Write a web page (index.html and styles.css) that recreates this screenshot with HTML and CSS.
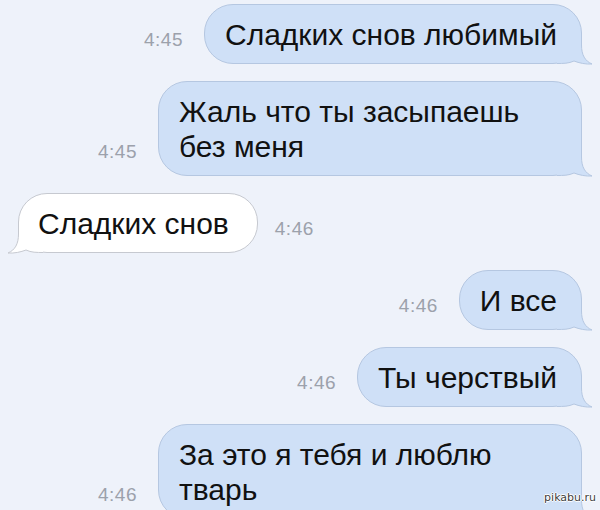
FILE: index.html
```html
<!doctype html>
<html lang="ru">
<head>
	<meta charset="UTF-8">
	<title>Сообщения</title>
	<link rel="stylesheet" href="styles.css">
</head>
<body>
	<div class="chat">
		<div class="row out">
			<span class="time">4:45</span>
			<div class="bubble"><span class="txt">Сладких снов любимый</span><svg class="tail" width="36" height="32" viewBox="0 0 36 32"><path class="fill" d="M0 0 L24.5 0 L24.5 12 C24.5 22 28 28 35 31 C29 31.5 22 30 17 28 C12 30.5 6 30.5 0 30.5 Z"/><path class="line" d="M24.5 0 L24.5 12 C24.5 22 28 28 35 31 C29 31.5 22 30 17 28 C12 30.5 6 30.5 0 30.5"/></svg></div>
		</div>
		<div class="row out">
			<span class="time">4:45</span>
			<div class="bubble wide"><span class="txt">Жаль что ты засыпаешь без меня</span><svg class="tail" width="36" height="32" viewBox="0 0 36 32"><path class="fill" d="M0 0 L24.5 0 L24.5 12 C24.5 22 28 28 35 31 C29 31.5 22 30 17 28 C12 30.5 6 30.5 0 30.5 Z"/><path class="line" d="M24.5 0 L24.5 12 C24.5 22 28 28 35 31 C29 31.5 22 30 17 28 C12 30.5 6 30.5 0 30.5"/></svg></div>
		</div>
		<div class="row in">
			<div class="bubble"><span class="txt">Сладких снов</span><svg class="tail" width="36" height="32" viewBox="0 0 36 32"><path class="fill" d="M0 0 L24.5 0 L24.5 12 C24.5 22 28 28 35 31 C29 31.5 22 30 17 28 C12 30.5 6 30.5 0 30.5 Z"/><path class="line" d="M24.5 0 L24.5 12 C24.5 22 28 28 35 31 C29 31.5 22 30 17 28 C12 30.5 6 30.5 0 30.5"/></svg></div>
			<span class="time">4:46</span>
		</div>
		<div class="row out">
			<span class="time">4:46</span>
			<div class="bubble"><span class="txt">И все</span><svg class="tail" width="36" height="32" viewBox="0 0 36 32"><path class="fill" d="M0 0 L24.5 0 L24.5 12 C24.5 22 28 28 35 31 C29 31.5 22 30 17 28 C12 30.5 6 30.5 0 30.5 Z"/><path class="line" d="M24.5 0 L24.5 12 C24.5 22 28 28 35 31 C29 31.5 22 30 17 28 C12 30.5 6 30.5 0 30.5"/></svg></div>
		</div>
		<div class="row out">
			<span class="time">4:46</span>
			<div class="bubble"><span class="txt">Ты черствый</span><svg class="tail" width="36" height="32" viewBox="0 0 36 32"><path class="fill" d="M0 0 L24.5 0 L24.5 12 C24.5 22 28 28 35 31 C29 31.5 22 30 17 28 C12 30.5 6 30.5 0 30.5 Z"/><path class="line" d="M24.5 0 L24.5 12 C24.5 22 28 28 35 31 C29 31.5 22 30 17 28 C12 30.5 6 30.5 0 30.5"/></svg></div>
		</div>
		<div class="row out">
			<span class="time">4:46</span>
			<div class="bubble wide"><span class="txt">За это я тебя и люблю тварь</span><svg class="tail" width="36" height="32" viewBox="0 0 36 32"><path class="fill" d="M0 0 L24.5 0 L24.5 12 C24.5 22 28 28 35 31 C29 31.5 22 30 17 28 C12 30.5 6 30.5 0 30.5 Z"/><path class="line" d="M24.5 0 L24.5 12 C24.5 22 28 28 35 31 C29 31.5 22 30 17 28 C12 30.5 6 30.5 0 30.5"/></svg></div>
		</div>
	</div>
	<span class="mark">pikabu.ru</span>
</body>
</html>
```

FILE: styles.css
```css
*{
	margin: 0;
	padding: 0;
	box-sizing: border-box;
}
html,body{
	width: 600px;
	height: 510px;
	overflow: hidden;
}
body{
	background: #eef2fa;
	font-family: "Liberation Sans", Arial, sans-serif;
	position: relative;
}
.chat{
	display: flex;
	flex-direction: column;
	gap: 17px;
	padding: 4px 18px 0 18px;
}
.row{
	display: flex;
	align-items: flex-end;
}
.row.out{
	justify-content: flex-end;
}
.row.in{
	justify-content: flex-start;
}
.time{
	font-size: 19px;
	line-height: 22px;
	letter-spacing: 0.5px;
	color: #9ca1ab;
	padding-bottom: 13px;
}
.out .time{
	margin-right: 21px;
}
.in .time{
	margin-left: 17px;
}
.bubble{
	position: relative;
	font-size: 30px;
	line-height: 35px;
	color: #111;
	padding: 12px 24px 11px 20px;
	border-radius: 29px;
	max-width: 424px;
}
.bubble.wide{
	width: 424px;
}
.txt{
	position: relative;
	z-index: 1;
}
.out .bubble{
	background: #cfe0f7;
	border: 1px solid #b5c7e1;
}
.in .bubble{
	background: #fff;
	border: 1px solid #c6c9d0;
	padding: 12px 28px 11px 19px;
}
.tail{
	position: absolute;
	bottom: -2px;
	right: -12px;
	display: block;
}
.in .tail{
	right: auto;
	left: -12px;
	transform: scaleX(-1);
}
.out .tail .fill{
	fill: #cfe0f7;
}
.out .tail .line{
	fill: none;
	stroke: #b5c7e1;
	stroke-width: 1;
}
.in .tail .fill{
	fill: #fff;
}
.in .tail .line{
	fill: none;
	stroke: #c6c9d0;
	stroke-width: 1;
}
.mark{
	position: absolute;
	right: 4px;
	bottom: 6px;
	font-family: "DejaVu Sans", sans-serif;
	font-size: 11px;
	color: #3f3f3f;
	text-shadow: 1px 0 #fff, -1px 0 #fff, 0 1px #fff, 0 -1px #fff;
}
```
